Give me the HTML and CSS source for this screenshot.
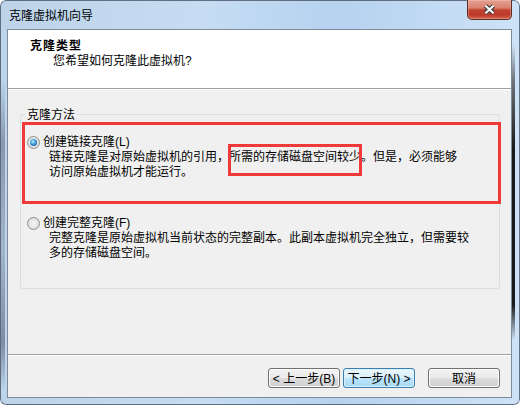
FILE: index.html
```html
<!DOCTYPE html>
<html lang="zh-CN">
<head>
<meta charset="utf-8">
<title>克隆虚拟机向导</title>
<link rel="stylesheet" href="styles.css">
</head>
<body>
<div class="window">
  <div class="titlebar">
    <span class="title">克隆虚拟机向导</span>
    <button class="close" type="button" aria-label="关闭">
      <svg width="13" height="11" viewBox="0 0 13 11" aria-hidden="true">
        <path d="M2.5 1.8 L10.5 9.2 M10.5 1.8 L2.5 9.2" stroke="#3c3c3c" stroke-width="4.4" fill="none"/>
        <path d="M2.5 1.8 L10.5 9.2 M10.5 1.8 L2.5 9.2" stroke="#ffffff" stroke-width="2.2" fill="none"/>
      </svg>
    </button>
  </div>
  <div class="client">
    <div class="header">
      <div class="h-title">克隆类型</div>
      <div class="h-sub">您希望如何克隆此虚拟机?</div>
    </div>
    <div class="body">
      <fieldset class="group">
        <legend>克隆方法</legend>
        <div class="option marked">
          <div class="opt-row"><span class="radio checked"></span><span>创建链接克隆(L)</span></div>
          <p class="desc">链接克隆是对原始虚拟机的引用，<span class="mark-inline">所需的存储磁盘空间较少</span>。但是，必须能够<br>访问原始虚拟机才能运行。</p>
        </div>
        <div class="option plain">
          <div class="opt-row"><span class="radio"></span><span>创建完整克隆(F)</span></div>
          <p class="desc">完整克隆是原始虚拟机当前状态的完整副本。此副本虚拟机完全独立，但需要较<br>多的存储磁盘空间。</p>
        </div>
      </fieldset>
    </div>
    <div class="footer">
      <button class="btn" type="button">&lt; 上一步(B)</button>
      <button class="btn default" type="button">下一步(N) &gt;</button>
      <button class="btn cancel" type="button">取消</button>
    </div>
  </div>
</div>
</body>
</html>
```
FILE: styles.css
```css
* { box-sizing: border-box; }
html, body { margin: 0; padding: 0; background: #ffffff; }
body {
  font-family: "Liberation Sans", "Noto Sans CJK SC", sans-serif;
  font-size: 12px;
  color: #000;
}

.window {
  width: 520px;
  height: 405px;
  display: flex;
  flex-direction: column;
  padding: 0 8px 7px 7px;
  border-radius: 6px;
  background:
    linear-gradient(to bottom, rgba(40,40,40,0) 0%, rgba(70,70,70,.7) 12%, rgba(15,15,15,.95) 35%, rgba(15,15,15,.95) 88%, rgba(40,40,40,0) 100%) right 5px top 45px / 3px 295px no-repeat,
    linear-gradient(to bottom, rgba(90,105,125,0) 0%, rgba(90,105,125,.55) 20%, rgba(110,125,145,.35) 55%, rgba(80,95,115,.6) 85%, rgba(90,105,125,0) 100%) left 1px top 80px / 4px 310px no-repeat,
    linear-gradient(to right, #bcd3ea 0%, #c5dcf3 40%, #b6d2ef 65%, #cde2f7 100%);
  box-shadow: inset 0 0 0 1px rgba(55,65,80,.7);
}

.titlebar {
  flex: none;
  height: 29px;
  display: flex;
  align-items: flex-start;
}
.title {
  padding: 9px 0 0 2px;
  line-height: 15px;
}
.close {
  margin-left: auto;
  width: 45px;
  height: 20px;
  padding: 0;
  border: 1px solid #5e2a24;
  border-top: none;
  border-radius: 0 0 5px 5px;
  background: linear-gradient(to bottom, #e3a293 0%, #d9806f 42%, #c3432f 52%, #bd3a2b 78%, #d2664b 100%);
  box-shadow: inset 0 0 0 1px rgba(255,205,195,.35);
  display: flex;
  align-items: center;
  justify-content: center;
}

.client {
  flex: 1;
  display: flex;
  flex-direction: column;
  border: 1px solid #7d8b9b;
  background: #f0f0f0;
}

.header {
  flex: none;
  height: 59px;
  background: #fff;
  border-bottom: 1px solid #a0a0a0;
  box-shadow: 0 1px 0 #ffffff;
  padding: 9px 0 0 22px;
}
.h-title {
  font-weight: bold;
  letter-spacing: 1px;
  line-height: 15px;
}
.h-sub {
  padding-left: 23px;
  line-height: 15px;
}

.body {
  flex: 1;
  padding-top: 17px;
}
.group {
  margin: 0 11px 0 12px;
  padding: 0 0 27px 0;
  border: 1px solid #d5dfe5;
  border-radius: 3px;
  min-width: 0;
}
.group legend {
  margin-left: 4px;
  padding: 2px 2px 0;
  line-height: 14px;
}

.option.marked {
  margin: 0 -2px 0 1px;
  border: 3px solid #f03a3a;
  padding: 10px 0 21px 2px;
}
.option.plain {
  margin-top: 12px;
  padding-left: 6px;
}
.opt-row {
  display: flex;
  align-items: center;
  gap: 3px;
  line-height: 15px;
}
.desc {
  margin: 0 0 0 22px;
  line-height: 15px;
}
.mark-inline {
  position: relative;
}
.mark-inline::after {
  content: "";
  position: absolute;
  left: -1px;
  right: -1px;
  top: -6px;
  bottom: -12px;
  border: 3px solid #f03a3a;
}

.radio {
  flex: none;
  width: 13px;
  height: 13px;
  border-radius: 50%;
  border: 1px solid #8e8f8f;
  background: radial-gradient(circle at 50% 50%, #f7f7f7 0%, #e4e4e4 55%, #cdcdcd 100%);
  display: flex;
  align-items: center;
  justify-content: center;
}
.radio.checked::after {
  content: "";
  width: 7px;
  height: 7px;
  border-radius: 50%;
  background: radial-gradient(circle at 42% 38%, #c8f0ff 0%, #52ade2 35%, #1b62a2 75%, #0d4077 100%);
}

.footer {
  flex: none;
  height: 43px;
  border-top: 1px solid #a0a0a0;
  box-shadow: inset 0 1px 0 #ffffff;
  display: flex;
  justify-content: flex-end;
  align-items: flex-start;
  padding: 13px 11px 0 0;
  gap: 3px;
}
.btn {
  width: 72px;
  height: 20px;
  padding: 2px 0 0;
  border: 1px solid #707070;
  border-radius: 3px;
  background: linear-gradient(to bottom, #f2f2f2 0%, #ebebeb 50%, #dddddd 50%, #cfcfcf 100%);
  box-shadow: inset 0 0 0 1px #fcfcfc;
  font: 12px/16px "Liberation Sans", "Noto Sans CJK SC", sans-serif;
  color: #000;
}
.btn.default {
  border-color: #3c7fb1;
  background: linear-gradient(to bottom, #eaf6fd 0%, #d9f0fc 50%, #bee6fd 50%, #a7d9f5 100%);
  box-shadow: inset 0 0 0 1px #d8f1fd;
}
.btn.cancel {
  margin-left: 10px;
}
```
